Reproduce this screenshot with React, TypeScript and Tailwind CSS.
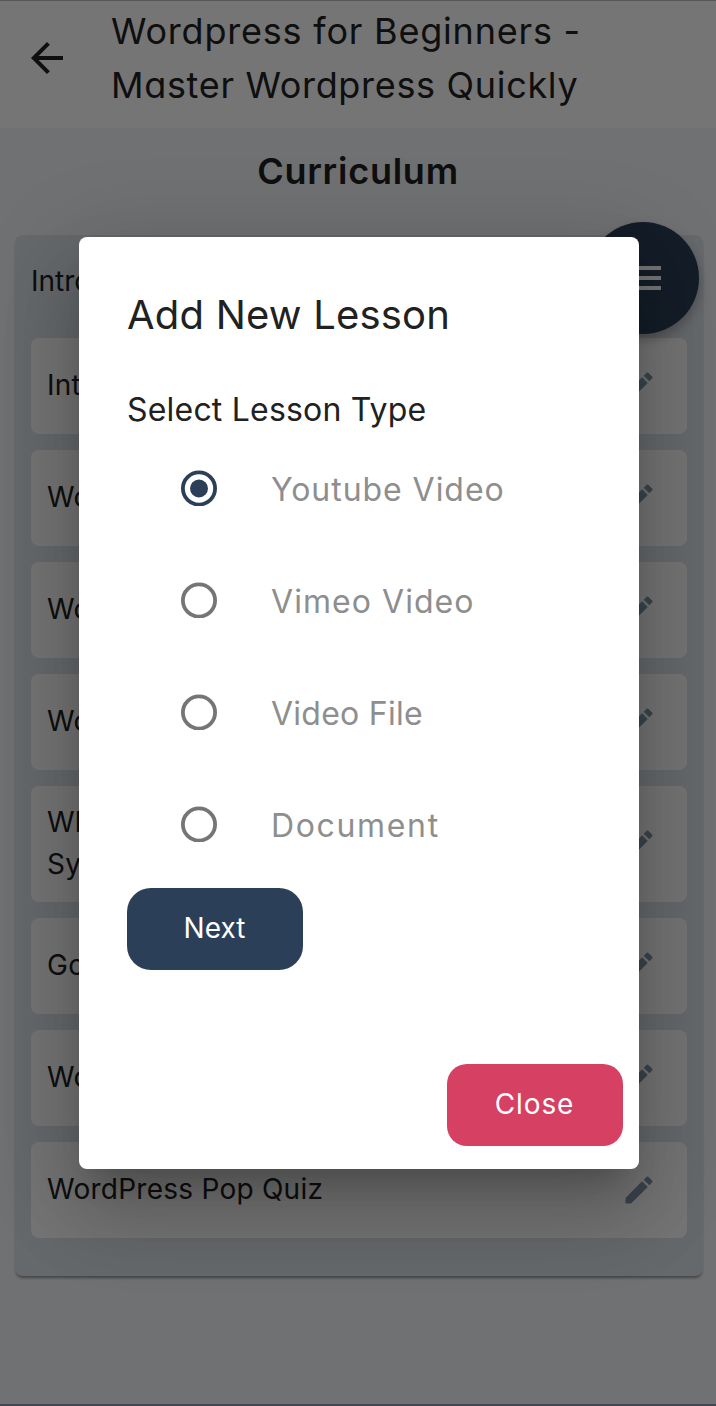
import type { ReactNode } from "react";

function PencilIcon() {
  return (
    <svg viewBox="0 0 24 24" className="size-9 shrink-0 fill-[#8098ab]">
      <path d="M3 17.46v3.04c0 .28.22.5.5.5h3.04c.13 0 .26-.05.35-.15L17.81 9.94l-3.75-3.75L3.15 17.1c-.1.1-.15.22-.15.36zM20.71 7.04a.996.996 0 0 0 0-1.41l-2.34-2.34a.996.996 0 0 0-1.41 0l-1.83 1.83 3.75 3.75 1.83-1.83z" />
    </svg>
  );
}

function LessonCard({ children, tall = false }: { children: ReactNode; tall?: boolean }) {
  return (
    <li
      className={
        "flex items-center justify-between rounded-lg bg-white pl-4 pr-[30px] text-[28px] leading-[42px] tracking-[0.25px] " +
        (tall ? "h-[116px]" : "h-24")
      }
    >
      <span className="-mt-0.5 whitespace-nowrap">{children}</span>
      <PencilIcon />
    </li>
  );
}

function RadioOption({ label, checked = false, spacing }: { label: string; checked?: boolean; spacing: string }) {
  return (
    <label className="flex h-28 items-center">
      <svg viewBox="0 0 36 36" className="size-9 shrink-0">
        <circle cx="18" cy="18.5" r="16.1" fill="none" strokeWidth="3.8" className={checked ? "stroke-[#2c3f58]" : "stroke-[#757575]"} />
        {checked && <circle cx="18" cy="18.5" r="9" className="fill-[#2c3f58]" />}
      </svg>
      <span className={"mt-1 ml-[54px] whitespace-nowrap text-[32px] leading-[48px] text-[#8e8e8e] " + spacing}>{label}</span>
    </label>
  );
}

export default function App() {
  return (
    <div className="relative h-[1406px] w-[716px] overflow-hidden bg-[#f5f6f9] font-['Inter','Liberation_Sans',sans-serif] font-[380] text-[#212121] [font-feature-settings:'cv11']">
      <div className="flex h-full flex-col border-b-2 border-[#8f9cae]">
        <header className="flex h-32 shrink-0 items-center border-t border-[#bdbdbd] bg-white pl-[23px]">
          <svg viewBox="0 0 24 24" className="-mt-3.5 size-12 shrink-0 fill-[#212121]">
            <path d="M20 11H7.83l5.59-5.59L12 4l-8 8 8 8 1.41-1.41L7.83 13H20v-2z" />
          </svg>
          <h1 className="-mt-3.5 ml-10 text-[36px] leading-[54px]">
            <span className="block whitespace-nowrap tracking-[0.8px]">Wordpress for Beginners -</span>
            <span className="block whitespace-nowrap tracking-[0.68px]">Master Wordpress Quickly</span>
          </h1>
        </header>
        <h2 className="mt-4 text-center text-[36px] leading-[54px] font-semibold tracking-[0.75px]">Curriculum</h2>
        <section className="mt-[37px] ml-[15px] h-[1041px] w-[688px] rounded-lg bg-[#dfe5ec] px-4 shadow-[0_3px_3px_-1px_rgba(0,0,0,0.4)]">
          <h3 className="flex h-[103px] items-center pb-3 text-[28px]">Introduction</h3>
          <ul className="flex flex-col gap-4">
            <LessonCard>Introduction</LessonCard>
            <LessonCard>WordPress Basics</LessonCard>
            <LessonCard>WordPress Setup</LessonCard>
            <LessonCard>WordPress Themes</LessonCard>
            <LessonCard tall>
              What is a Content
              <br />
              System
            </LessonCard>
            <LessonCard>Going Live</LessonCard>
            <LessonCard>WordPress Plugins</LessonCard>
            <LessonCard>WordPress Pop Quiz</LessonCard>
          </ul>
        </section>
      </div>

      <button className="absolute top-[222px] left-[587px] flex size-28 items-center justify-center rounded-full bg-[#2c3f58] shadow-[0_6px_12px_rgba(0,0,0,0.25)]">
        <svg viewBox="0 0 24 24" className="size-12 fill-white">
          <path d="M3 18h18v-2H3v2zm0-5h18v-2H3v2zm0-7v2h18V6H3z" />
        </svg>
      </button>

      <div className="absolute inset-0 flex items-start justify-center bg-black/54 pt-[236.5px] pl-0.5">
        <div
          role="dialog"
          className="flex h-[932px] w-[560px] flex-col rounded-lg bg-white px-12 shadow-[0_22px_30px_-14px_rgba(0,0,0,0.2),0_48px_76px_6px_rgba(0,0,0,0.14),0_18px_92px_16px_rgba(0,0,0,0.12)]"
        >
          <h2 className="mt-12 text-[40px] leading-[60px] tracking-[0.2px] whitespace-nowrap">Add New Lesson</h2>
          <p className="mt-[41px] text-[32px] leading-[48px] tracking-[0.2px] whitespace-nowrap">Select Lesson Type</p>
          <div className="-mt-0.5 flex flex-col pl-[54px]">
            <RadioOption label="Youtube Video" checked spacing="tracking-[0.95px]" />
            <RadioOption label="Vimeo Video" spacing="tracking-[1.05px]" />
            <RadioOption label="Video File" spacing="tracking-[0.25px]" />
            <RadioOption label="Document" spacing="tracking-[1.65px]" />
          </div>
          <button className="mt-2 h-[82px] w-44 rounded-3xl bg-[#2c3f58] pr-px pb-0.5 text-[28px] text-white">Next</button>
          <button className="mt-[94px] -mr-8 h-[82px] w-44 self-end rounded-[20px] bg-[#d64062] pr-px pb-0.5 text-[28px] tracking-[0.9px] text-white">Close</button>
        </div>
      </div>
    </div>
  );
}
